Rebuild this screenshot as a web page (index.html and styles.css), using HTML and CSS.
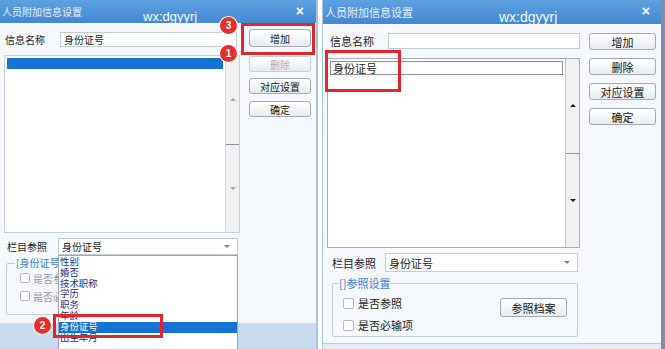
FILE: index.html
```html
<!DOCTYPE html>
<html lang="zh-CN">
<head>
    <meta charset="UTF-8">
    <title>人员附加信息设置</title>
    <link rel="stylesheet" href="styles.css">
</head>
<body>
    <div class="screens">
        <!-- left capture: dropdown open -->
        <div class="win win-left">
            <div class="titlebar">
                <span class="title">人员附加信息设置</span>
                <span class="mark">wx:dgyyrj</span>
                <span class="close">×</span>
            </div>
            <div class="body">
                <div class="main">
                    <div class="row name-row">
                        <span class="label">信息名称</span>
                        <div class="input">身份证号</div>
                    </div>
                    <div class="listbox">
                        <div class="list-items">
                            <div class="list-row selected"></div>
                        </div>
                        <div class="scrollbar">
                            <div class="sb-half"><span class="arrow up"></span></div>
                            <div class="sb-half"><span class="arrow down"></span></div>
                        </div>
                    </div>
                    <div class="row combo-row">
                        <span class="label">栏目参照</span>
                        <div class="combo"><span>身份证号</span><span class="caret"></span></div>
                    </div>
                    <fieldset class="group">
                        <legend>[身份证号</legend>
                        <div class="group-inner">
                            <div class="checks">
                                <label class="check"><span class="box"></span>是否参</label>
                                <label class="check"><span class="box"></span>是否必</label>
                            </div>
                        </div>
                    </fieldset>
                </div>
                <div class="buttons">
                    <div class="btn btn-add">增加</div>
                    <div class="btn btn-del disabled">删除</div>
                    <div class="btn">对应设置</div>
                    <div class="btn btn-ok">确定</div>
                </div>
            </div>
            <div class="statusbar"></div>

            <ul class="dropdown">
                <li>性别</li>
                <li>婚否</li>
                <li>技术职称</li>
                <li>学历</li>
                <li>职务</li>
                <li>年龄</li>
                <li class="selected">身份证号</li>
                <li>出生年月</li>
            </ul>

            <div class="mark-box box-add"></div>
            <div class="mark-box box-item"></div>
            <span class="badge badge-3">3</span>
            <span class="badge badge-1">1</span>
            <span class="badge badge-2">2</span>
        </div>

        <!-- right capture: row added -->
        <div class="win win-right">
            <div class="titlebar">
                <span class="title">人员附加信息设置</span>
                <span class="mark">wx:dgyyrj</span>
                <span class="close">×</span>
            </div>
            <div class="body">
                <div class="main">
                    <div class="row name-row">
                        <span class="label">信息名称</span>
                        <div class="input"></div>
                    </div>
                    <div class="listbox">
                        <div class="list-items">
                            <div class="edit-cell">身份证号</div>
                        </div>
                        <div class="scrollbar">
                            <div class="sb-half"><span class="arrow up"></span></div>
                            <div class="sb-half"><span class="arrow down"></span></div>
                        </div>
                    </div>
                    <div class="row combo-row">
                        <span class="label">栏目参照</span>
                        <div class="combo"><span>身份证号</span><span class="caret"></span></div>
                    </div>
                    <fieldset class="group">
                        <legend>[]参照设置</legend>
                        <div class="group-inner">
                            <div class="checks">
                                <label class="check"><span class="box"></span>是否参照</label>
                                <label class="check"><span class="box"></span>是否必输项</label>
                            </div>
                            <div class="btn btn-ref">参照档案</div>
                        </div>
                    </fieldset>
                </div>
                <div class="buttons">
                    <div class="btn">增加</div>
                    <div class="btn">删除</div>
                    <div class="btn">对应设置</div>
                    <div class="btn">确定</div>
                </div>
            </div>
            <div class="footer"></div>

            <div class="mark-box box-cell"></div>
        </div>
    </div>
</body>
</html>
```

FILE: styles.css
```css
* {
    box-sizing: border-box;
}
body {
    margin: 0;
    background: #fff;
    font-family: "Noto Sans CJK SC", "Microsoft YaHei", sans-serif;
    color: #1b1b1b;
}
.screens {
    display: flex;
    width: 665px;
    height: 349px;
    overflow: hidden;
}
.win {
    position: relative;
    display: flex;
    flex-direction: column;
    height: 349px;
}
.win-left {
    width: 318px;
    font-size: 10px;
    border-right: 2px solid #a9c3e3;
}
.win-right {
    width: 343px;
    margin-left: 4px;
    font-size: 11px;
    border-left: 1px solid #a9c3e3;
    border-right: 4px solid #7f8ea4;
}

/* title bar */
.titlebar {
    display: flex;
    align-items: flex-start;
    flex-shrink: 0;
    height: 23px;
    background: linear-gradient(#5ea1e1, #4288d3);
    color: #fff;
}
.win-right .titlebar {
    height: 24px;
}
.title {
    padding: 6px 0 0 2px;
    line-height: 12px;
    color: #e6effa;
    white-space: nowrap;
}
.mark {
    margin-left: 61px;
    padding-top: 10px;
    font: 13px/14px "Liberation Sans", Arial, sans-serif;
    color: #f4f8fe;
}
.win-right .mark {
    margin-left: 86px;
    font-size: 14px;
}
.close {
    margin-left: auto;
    padding: 4px 12px 0 0;
    font: bold 14px/14px "Liberation Sans", Arial, sans-serif;
}
.win-right .close {
    padding-right: 11px;
}

/* body */
.body {
    display: flex;
    flex-shrink: 0;
    background: #f5f8fc;
}
.win-left .body {
    height: 300px;
}
.win-right .body {
    height: 319px;
}
.main {
    display: flex;
    flex-direction: column;
}
.win-left .main {
    width: 240px;
    padding-left: 4px;
}
.win-right .main {
    width: 258px;
    padding-left: 4px;
}
.row {
    display: flex;
    align-items: center;
}
.label {
    white-space: nowrap;
}
.input,
.combo {
    display: flex;
    align-items: center;
    background: #fff;
    border: 1px solid #c3cbd6;
    padding-left: 3px;
}
.combo {
    justify-content: space-between;
    padding-right: 7px;
}
.caret {
    width: 0;
    height: 0;
    border-left: 3px solid transparent;
    border-right: 3px solid transparent;
    border-top: 3px solid #7a7f86;
}

/* left window rows */
.win-left .name-row {
    margin-top: 9px;
    height: 15px;
}
.win-left .name-row .label {
    width: 56px;
    padding-left: 1px;
}
.win-left .name-row .input {
    width: 177px;
    height: 15px;
}
.win-left .listbox {
    margin-top: 8px;
    width: 236px;
    height: 178px;
}
.win-left .combo-row {
    margin-top: 5px;
    height: 17px;
}
.win-left .combo-row .label {
    width: 54px;
    padding-left: 3px;
}
.win-left .combo {
    width: 180px;
    height: 17px;
}
.win-left .group {
    margin: 2px 0 0 2px;
    width: 232px;
    height: 58px;
    padding: 0 0 0 13px;
}
/* the open dropdown hides the rest of this group */
.win-left .group legend {
    max-width: 45px;
    overflow: hidden;
    white-space: nowrap;
}
.win-left .group-inner {
    width: 38px;
    overflow: hidden;
}
.win-left .check {
    white-space: nowrap;
}

/* right window rows */
.win-right .name-row {
    margin-top: 9px;
    height: 15px;
}
.win-right .name-row .label {
    width: 61px;
    padding-left: 3px;
}
.win-right .name-row .input {
    width: 192px;
    height: 16px;
}
.win-right .listbox {
    margin-top: 10px;
    width: 253px;
    height: 190px;
    border-color: #a9adb3;
}
.win-right .combo-row {
    margin-top: 5px;
    height: 19px;
}
.win-right .combo-row .label {
    width: 58px;
    padding-left: 5px;
}
.win-right .combo {
    width: 193px;
    height: 19px;
}
.win-right .group {
    margin: 5px 0 0 5px;
    width: 246px;
    padding: 3px 10px 0 10px;
}
.win-right .group-inner {
    display: flex;
    justify-content: space-between;
    align-items: flex-start;
}

/* list box */
.listbox {
    display: flex;
    background: #fff;
    border: 1px solid #c9d0da;
}
.list-items {
    flex: 1;
    padding: 2px;
}
.list-row.selected {
    height: 11px;
    background: #1772d6;
}
.edit-cell {
    width: 233px;
    height: 14px;
    border: 1px solid #8d9096;
    line-height: 12px;
    padding-left: 2px;
    color: #222;
}
.scrollbar {
    display: flex;
    flex-direction: column;
    width: 14px;
    background: #f0f1f3;
    border-left: 1px solid #d3d7dc;
}
.win-right .scrollbar {
    border-left-color: #c4c7cc;
}
.sb-half {
    flex: 1;
    display: flex;
    align-items: center;
    justify-content: center;
}
.sb-half + .sb-half {
    border-top: 1px solid #8e9399;
}
.arrow {
    width: 0;
    height: 0;
    border-left: 3px solid transparent;
    border-right: 3px solid transparent;
}
.arrow.up {
    border-bottom: 3px solid #a4a8ae;
}
.arrow.down {
    border-top: 3px solid #a4a8ae;
}
.win-right .arrow.up {
    border-bottom-color: #1c1c1c;
}
.win-right .arrow.down {
    border-top-color: #1c1c1c;
}

/* group box */
.group {
    border: 1px solid #c3ccd8;
    border-radius: 2px;
    min-width: 0;
    margin-right: 0;
}
.group legend {
    padding: 0 1px;
    margin-left: -5px;
    line-height: 12px;
    color: #3b7dd6;
}
.checks {
    display: flex;
    flex-direction: column;
}
.check {
    display: flex;
    align-items: center;
    height: 18px;
    color: #999;
}
.win-right .check {
    height: 22px;
    color: #1b1b1b;
}
.box {
    flex-shrink: 0;
    width: 10px;
    height: 10px;
    margin-right: 3px;
    background: #fff;
    border: 1px solid #b0b8c3;
    border-radius: 2px;
}
.win-right .box {
    width: 11px;
    height: 11px;
    margin-right: 4px;
}

/* command buttons */
.buttons {
    display: flex;
    flex-direction: column;
}
.win-left .buttons {
    width: 62px;
    margin-left: 9px;
    padding-top: 6px;
    gap: 6px;
}
.win-right .buttons {
    width: 67px;
    margin-left: 8px;
    padding-top: 9px;
    gap: 8px;
}
.btn {
    display: flex;
    align-items: center;
    justify-content: center;
    height: 16px;
    border: 1px solid #a2aab5;
    border-radius: 3px;
    background: linear-gradient(#ffffff, #e8ecf0);
    color: #151515;
    white-space: nowrap;
}
.win-left .btn-add {
    height: 18px;
}
.win-left .btn-del {
    margin-top: 3px;
}
.win-left .btn-ok {
    margin-top: 1px;
}
.win-right .btn {
    height: 17px;
}
.btn.disabled {
    color: #a9afb7;
    border-color: #c6ccd4;
}
.win-right .btn-ref {
    width: 67px;
    height: 19px;
    margin-top: 6px;
}

.statusbar {
    flex: 1;
    background: #c9dbee;
}
.footer {
    flex: 1;
    background: #e3ebf5;
    border-top: 1px solid #b3c8e2;
}

/* open dropdown of the left window */
.dropdown {
    position: absolute;
    left: 58px;
    top: 255px;
    width: 180px;
    height: 100px;
    margin: 0;
    padding: 1px 0 0;
    list-style: none;
    background: #fff;
    border: 1px solid #9aa6b6;
    overflow: hidden;
}
.dropdown li {
    height: 10.8px;
    line-height: 10.8px;
    padding-left: 1px;
    font-family: "Liberation Sans", "Noto Sans CJK SC", sans-serif;
    font-size: 9.4px;
    color: #1e2a8a;
    white-space: nowrap;
}
.dropdown li.selected {
    background: #1772d6;
    color: #fff;
}

/* annotation marks */
.mark-box {
    position: absolute;
    border: 3px solid #e3262b;
}
.box-add {
    left: 241px;
    top: 23px;
    width: 74px;
    height: 32px;
}
.box-item {
    left: 53px;
    top: 314px;
    width: 110px;
    height: 24px;
}
.box-cell {
    left: 2px;
    top: 50px;
    width: 76px;
    height: 42px;
}
.badge {
    position: absolute;
    width: 17px;
    height: 17px;
    border-radius: 50%;
    background: #e3302d;
    box-shadow: 0 0 0 1px #fff;
    color: #fff;
    font: bold 10px/17px "Liberation Sans", Arial, sans-serif;
    text-align: center;
}
.badge-3 {
    left: 220px;
    top: 17px;
}
.badge-1 {
    left: 220px;
    top: 45px;
}
.badge-2 {
    left: 34px;
    top: 317px;
}
```
